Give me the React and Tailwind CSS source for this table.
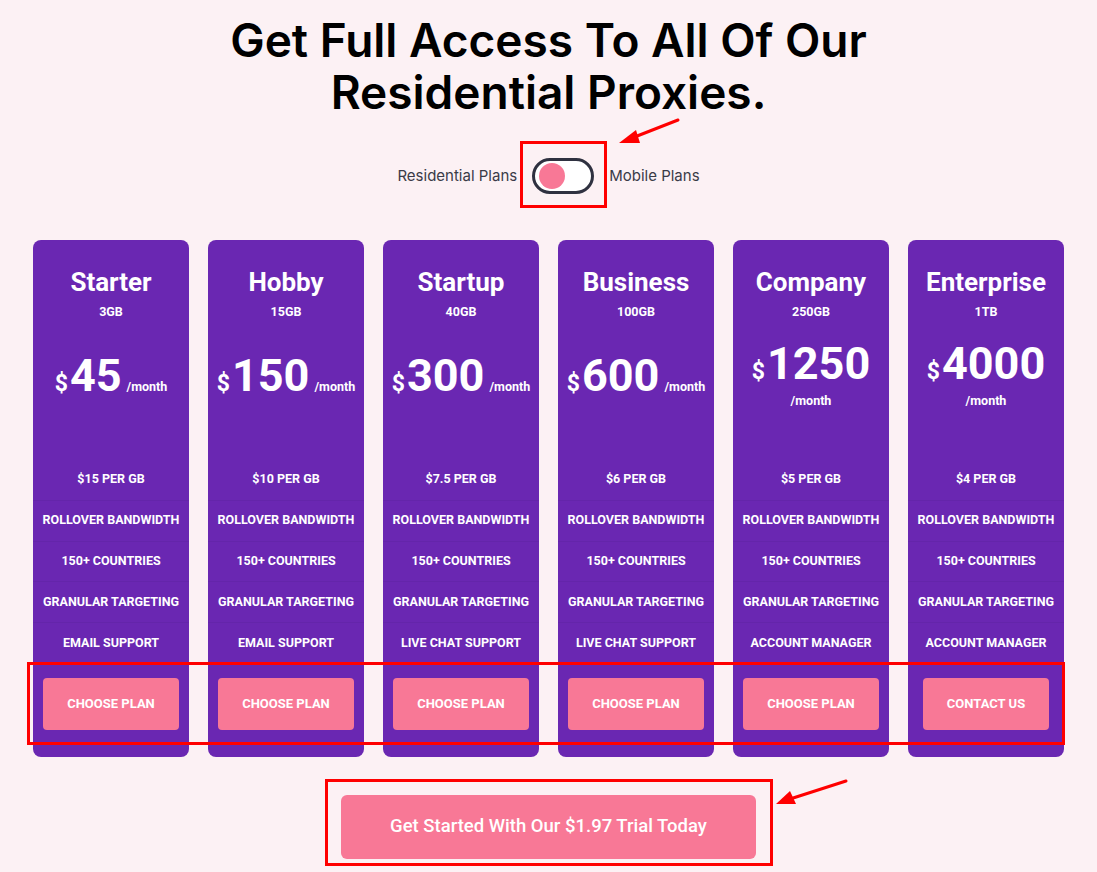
import React from 'react';

const plans = [
	{ name: "Starter", data: "3GB", price: "45", per: "$15 PER GB", support: "EMAIL SUPPORT", cta: "CHOOSE PLAN" },
	{ name: "Hobby", data: "15GB", price: "150", per: "$10 PER GB", support: "EMAIL SUPPORT", cta: "CHOOSE PLAN" },
	{ name: "Startup", data: "40GB", price: "300", per: "$7.5 PER GB", support: "LIVE CHAT SUPPORT", cta: "CHOOSE PLAN" },
	{ name: "Business", data: "100GB", price: "600", per: "$6 PER GB", support: "LIVE CHAT SUPPORT", cta: "CHOOSE PLAN" },
	{ name: "Company", data: "250GB", price: "1250", per: "$5 PER GB", support: "ACCOUNT MANAGER", cta: "CHOOSE PLAN", wrap: true },
	{ name: "Enterprise", data: "1TB", price: "4000", per: "$4 PER GB", support: "ACCOUNT MANAGER", cta: "CONTACT US", wrap: true },
];

function PlanCard({ plan }) {
	const features = [plan.per, "ROLLOVER BANDWIDTH", "150+ COUNTRIES", "GRANULAR TARGETING", plan.support];

	return (
		<div className="w-[156px] bg-[#6a27b2] rounded-[8px] pt-[26px] pb-[27px] flex flex-col items-center text-white">
			<h3 className="text-[26px] leading-[32px] font-bold">{plan.name}</h3>
			<div className="text-[12.5px] leading-[16px] font-bold mt-[6px]">{plan.data}</div>
			<div className={"h-[139px] w-full flex flex-col items-center " + (plan.wrap ? "pt-[16px]" : "pt-[28px]")}>
				<div className="flex items-baseline justify-center">
					<span className="text-[23px] font-bold leading-[56px]">$</span>
					<span className="text-[45px] font-bold leading-[56px] ml-[2px]">{plan.price}</span>
					{!plan.wrap && <span className="text-[12.5px] font-bold ml-[5px]">/month</span>}
				</div>
				{plan.wrap && <div className="text-[12.5px] font-bold leading-[16px] -mt-[7px]">/month</div>}
			</div>
			<ul className="w-full">
				{features.map((f, i) => (
					<li key={i} className={"h-[40.75px] flex items-center justify-center text-[12.5px] font-bold " + (i > 0 ? "border-t border-[#6425aa]" : "")}>
						{f}
					</li>
				))}
			</ul>
			<button className="mt-[15px] px-[24px] h-[52px] rounded-[4px] bg-[#f87896] text-[13px] font-bold text-white">
				{plan.cta}
			</button>
		</div>
	);
}

function Annotations() {
	return (
		<svg className="absolute top-0 left-0 pointer-events-none" width="1097" height="872" viewBox="0 0 1097 872">
			<g fill="none" stroke="#ff0000" strokeWidth="3">
				<rect x="521.5" y="142.5" width="84" height="64" />
				<rect x="28.5" y="663.5" width="1035" height="80" />
				<rect x="326.5" y="780.5" width="445" height="84" />
				<line x1="678" y1="120" x2="632" y2="138" strokeLinecap="round" />
				<line x1="846" y1="781" x2="790" y2="799" strokeLinecap="round" />
			</g>
			<polygon points="619,143 636,130 640,143" fill="#ff0000" />
			<polygon points="776,804 790,791 796,804" fill="#ff0000" />
		</svg>
	);
}

function App() {
	return (
		<div className="relative w-[1097px] min-h-[872px] bg-[#fcf1f4] flex flex-col items-center pt-[14px] pb-[13px]" style={{ fontFamily: "Roboto, 'Liberation Sans', sans-serif" }}>
			<h1 className="text-[46px] leading-[52px] font-semibold text-black text-center" style={{ fontFamily: "Inter, 'Liberation Sans', sans-serif" }}>
				Get Full Access To All Of Our<br />Residential Proxies.
			</h1>

			<div className="flex items-center gap-[15px] mt-[40px] text-[15px] text-[#3a3b47]" style={{ fontFamily: "Inter, 'Liberation Sans', sans-serif" }}>
				<span>Residential Plans</span>
				<div className="w-[62px] h-[36px] rounded-full border-[3px] border-[#2f3140] bg-white flex items-center pl-[4px]">
					<div className="w-[26px] h-[26px] rounded-full bg-[#f87896]"></div>
				</div>
				<span>Mobile Plans</span>
			</div>

			<div className="flex gap-[19px] mt-[46px]">
				{plans.map((p) => (
					<PlanCard key={p.name} plan={p} />
				))}
			</div>

			<button className="mt-[38px] w-[415px] h-[64px] rounded-[6px] bg-[#f87896] text-white text-[18.5px] font-medium">
				Get Started With Our $1.97 Trial Today
			</button>

			<Annotations />
		</div>
	);
}

export default App;
